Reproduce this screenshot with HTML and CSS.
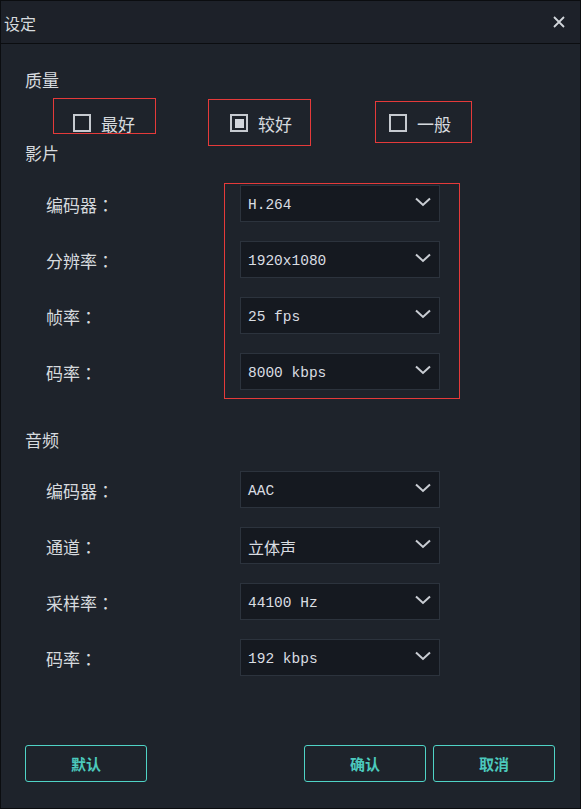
FILE: index.html
```html
<!DOCTYPE html>
<html lang="zh-CN">
<head>
<meta charset="utf-8">
<title>设定</title>
<link rel="stylesheet" href="styles.css">
</head>
<body>
<div class="dialog">
  <div class="titlebar">
    <span class="title">设定</span>
    <svg class="close" width="12" height="12" viewBox="0 0 12 12"><path d="M1 1L11 11M11 1L1 11" stroke="#d2d6db" stroke-width="1.8" fill="none"/></svg>
  </div>
  <div class="content">
    <div class="section-title first">质量</div>
    <div class="quality">
      <div class="opt"><span class="cb"></span><span class="opt-text">最好</span></div>
      <div class="opt wide"><span class="cb checked"><span class="dot"></span></span><span class="opt-text">较好</span></div>
      <div class="opt"><span class="cb"></span><span class="opt-text">一般</span></div>
    </div>

    <div class="section-title video">影片</div>
    <div class="rows video-rows">
      <div class="row"><span class="lbl">编码器<span class="colon" lang="zh-TW">：</span></span><div class="select"><span class="val">H.264</span><svg class="chev" width="16" height="10" viewBox="0 0 16 10"><path d="M1 1.5L8 8L15 1.5" stroke="#c9cdd3" stroke-width="2" fill="none"/></svg></div></div>
      <div class="row"><span class="lbl">分辨率<span class="colon" lang="zh-TW">：</span></span><div class="select"><span class="val">1920x1080</span><svg class="chev" width="16" height="10" viewBox="0 0 16 10"><path d="M1 1.5L8 8L15 1.5" stroke="#c9cdd3" stroke-width="2" fill="none"/></svg></div></div>
      <div class="row"><span class="lbl">帧率<span class="colon" lang="zh-TW">：</span></span><div class="select"><span class="val">25 fps</span><svg class="chev" width="16" height="10" viewBox="0 0 16 10"><path d="M1 1.5L8 8L15 1.5" stroke="#c9cdd3" stroke-width="2" fill="none"/></svg></div></div>
      <div class="row"><span class="lbl">码率<span class="colon" lang="zh-TW">：</span></span><div class="select"><span class="val">8000 kbps</span><svg class="chev" width="16" height="10" viewBox="0 0 16 10"><path d="M1 1.5L8 8L15 1.5" stroke="#c9cdd3" stroke-width="2" fill="none"/></svg></div></div>
    </div>

    <div class="section-title audio">音频</div>
    <div class="rows audio-rows">
      <div class="row"><span class="lbl">编码器<span class="colon" lang="zh-TW">：</span></span><div class="select"><span class="val">AAC</span><svg class="chev" width="16" height="10" viewBox="0 0 16 10"><path d="M1 1.5L8 8L15 1.5" stroke="#c9cdd3" stroke-width="2" fill="none"/></svg></div></div>
      <div class="row"><span class="lbl">通道<span class="colon" lang="zh-TW">：</span></span><div class="select"><span class="val cjk">立体声</span><svg class="chev" width="16" height="10" viewBox="0 0 16 10"><path d="M1 1.5L8 8L15 1.5" stroke="#c9cdd3" stroke-width="2" fill="none"/></svg></div></div>
      <div class="row"><span class="lbl">采样率<span class="colon" lang="zh-TW">：</span></span><div class="select"><span class="val">44100 Hz</span><svg class="chev" width="16" height="10" viewBox="0 0 16 10"><path d="M1 1.5L8 8L15 1.5" stroke="#c9cdd3" stroke-width="2" fill="none"/></svg></div></div>
      <div class="row"><span class="lbl">码率<span class="colon" lang="zh-TW">：</span></span><div class="select"><span class="val">192 kbps</span><svg class="chev" width="16" height="10" viewBox="0 0 16 10"><path d="M1 1.5L8 8L15 1.5" stroke="#c9cdd3" stroke-width="2" fill="none"/></svg></div></div>
    </div>
  </div>

  <div class="footer">
    <button class="btn">默认</button>
    <div class="btn-group">
      <button class="btn">确认</button>
      <button class="btn">取消</button>
    </div>
  </div>

  <div class="mark mark-1"></div>
  <div class="mark mark-2"></div>
  <div class="mark mark-3"></div>
  <div class="mark mark-4"></div>
</div>
</body>
</html>
```

FILE: styles.css
```css
* { box-sizing: border-box; }

html, body {
  margin: 0;
  padding: 0;
  background: #1e232b;
}

body {
  font-family: "Noto Sans CJK SC", "Noto Sans", sans-serif;
  color: #d6dade;
}

.dialog {
  position: relative;
  width: 581px;
  height: 809px;
  border: 1px solid #0b0d10;
  background: #1e232b;
  display: flex;
  flex-direction: column;
}

.titlebar {
  height: 43px;
  border-bottom: 1px solid #0b0d10;
  display: flex;
  align-items: center;
  justify-content: space-between;
  padding: 2px 15px 0 3px;
  background: #1d2129;
}

.title {
  font-size: 16px;
  line-height: 20px;
  color: #d6dade;
}

.close {
  display: block;
  margin-top: -2px;
}

.content {
  padding-left: 24px;
}

.section-title {
  font-size: 17px;
  line-height: 22px;
  color: #d6dade;
}

.section-title.first { margin-top: 25px; }
.section-title.video { margin-top: 10px; }
.section-title.audio { margin-top: 39px; }

.quality {
  display: flex;
  margin-top: 23px;
  padding-left: 48px;
  height: 18px;
}

.opt {
  display: flex;
  align-items: center;
  width: 157px;
  height: 18px;
}

.opt.wide { width: 159px; }

.cb {
  width: 18px;
  height: 18px;
  border: 2px solid #c6cad0;
  display: flex;
  align-items: center;
  justify-content: center;
  flex: none;
}

.dot {
  width: 9px;
  height: 9px;
  background: #d2d6dc;
}

.opt-text {
  margin-left: 10px;
  font-size: 17px;
  line-height: 22px;
  margin-top: 2px;
}

.rows {
  display: flex;
  flex-direction: column;
  gap: 19px;
  padding-left: 21px;
}

.video-rows { margin-top: 21px; }
.audio-rows { margin-top: 20px; }

.row {
  display: flex;
  align-items: center;
  height: 37px;
}

.lbl {
  width: 194px;
  font-size: 17px;
  line-height: 22px;
  padding-top: 2px;
  color: #d6dade;
}

.colon {
  font-family: "Noto Sans CJK TC", sans-serif;
}

.select {
  width: 200px;
  height: 37px;
  background: #151920;
  border: 1px solid #2c333d;
  display: flex;
  align-items: center;
  justify-content: space-between;
  padding: 0 8px 0 7px;
}

.val {
  font-family: "Liberation Mono", monospace;
  font-size: 14.5px;
  line-height: 18px;
  color: #dadde2;
  padding-top: 3px;
}

.val.cjk {
  font-family: "Noto Sans CJK SC", sans-serif;
  font-size: 16px;
  padding-top: 2px;
}

.chev {
  display: block;
  margin-top: -3px;
}

.footer {
  margin-top: auto;
  display: flex;
  justify-content: space-between;
  padding: 0 25px 26px 24px;
}

.btn-group {
  display: flex;
  gap: 7px;
}

.btn {
  width: 122px;
  height: 37px;
  background: transparent;
  border: 1px solid #4fd3c6;
  border-radius: 3px;
  color: #4cc9bd;
  font-family: "Noto Sans CJK SC", sans-serif;
  font-weight: 700;
  font-size: 15px;
  padding: 0;
}

.mark {
  position: absolute;
  border: 1px solid #e53a3a;
  pointer-events: none;
}

.mark-1 { left: 52px;  top: 97px;  width: 103px; height: 36px; }
.mark-2 { left: 207px; top: 98px;  width: 103px; height: 47px; }
.mark-3 { left: 374px; top: 100px; width: 97px;  height: 42px; }
.mark-4 { left: 223px; top: 182px; width: 236px; height: 216px; }
```
